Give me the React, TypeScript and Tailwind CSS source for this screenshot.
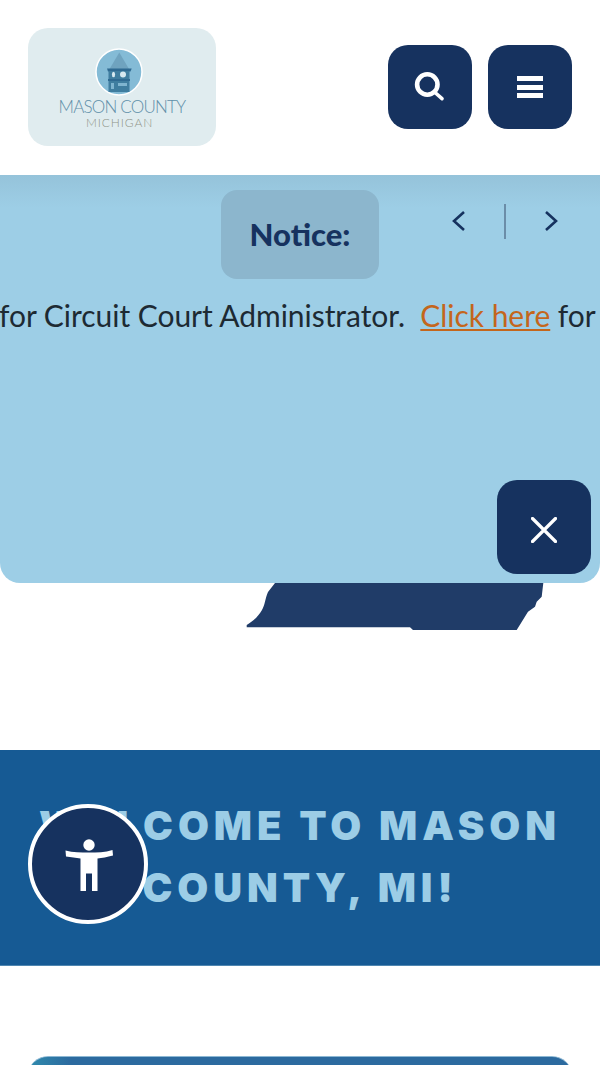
const bodyFont = { fontFamily: '"Lato", "Noto Sans", sans-serif' };

function Logo() {
  return (
    <div className="flex h-[118px] w-[188px] flex-col items-center rounded-[20px] bg-[#e0ecef] pt-[20px]">
      <svg width="48" height="48" viewBox="0 0 48 48" className="mr-[6px]">
        <circle cx="24" cy="24" r="23" fill="#84bbd6" stroke="#fff" strokeWidth="1.5" />
        <path d="M24.3 4.5 L34 21 H14.5 Z" fill="#6fa3bf" />
        <path d="M12 20.5 H36.7 L35.5 23.5 H13 Z" fill="#2f6a92" />
        <rect x="13.5" y="23" width="21" height="8" fill="#3f7d9f" />
        <rect x="13" y="31" width="22" height="2" fill="#2f6a92" />
        <rect x="13.5" y="33" width="21" height="11" fill="#3f7d9f" />
        <ellipse cx="18.5" cy="26.5" rx="1.6" ry="2.8" fill="#d6e8f0" />
        <circle cx="28" cy="26.5" r="3" fill="#d6e8f0" />
        <rect x="16" y="35" width="3" height="6" fill="#7fb4cf" />
        <rect x="23" y="35" width="9" height="3" fill="#7fb4cf" />
      </svg>
      <div className="mt-[1px] text-[17px] leading-[20px] font-light tracking-[-0.8px] whitespace-nowrap text-[#5f8fa9]" style={bodyFont}>
        MASON COUNTY
      </div>
      <div className="mr-[5px] text-[12px] leading-[11px] font-light tracking-[0.9px] text-[#8f9488]" style={bodyFont}>
        MICHIGAN
      </div>
    </div>
  );
}

function SearchIcon() {
  return (
    <svg width="32" height="32" viewBox="0 0 32 32" fill="none" stroke="#fff">
      <circle cx="13.3" cy="13.5" r="10.2" strokeWidth="4.6" />
      <path d="M21 21.5 L28 27.7" strokeWidth="3.6" strokeLinecap="round" />
    </svg>
  );
}

function MenuIcon() {
  return (
    <div className="flex w-[26px] flex-col gap-[3.3px]">
      <div className="h-[5px] bg-white" />
      <div className="h-[5px] bg-white" />
      <div className="h-[5px] bg-white" />
    </div>
  );
}

function CloseIcon() {
  return (
    <svg width="26" height="26" viewBox="0 0 26 26" stroke="#fff" strokeWidth="3.2" strokeLinecap="round">
      <path d="M1.5 1.5 L24.5 24.5 M24.5 1.5 L1.5 24.5" />
    </svg>
  );
}

function AccessIcon() {
  return (
    <svg width="50" height="54" viewBox="0 0 50 54" fill="#fff" className="ml-[1px]">
      <circle cx="25" cy="8" r="5.7" />
      <path d="M1.5 13.5 C9 15.5 17 15.5 25 15.5 C33 15.5 41 15.5 48.5 13 L49 18.5 C43 20 38 21 33.5 21.5 V54 H28 V36.5 H22 V54 H16.5 V21.5 C12 21 7 20 2 19.5 Z" />
    </svg>
  );
}

export default function App() {
  return (
    <div className="relative h-[1065px] w-[600px] overflow-hidden bg-white" style={bodyFont}>
      <header className="flex h-[175px] items-start justify-between px-[28px] pt-[28px]">
        <Logo />
        <div className="mt-[17px] flex gap-[16px]">
          <button className="flex h-[84px] w-[84px] items-center justify-center rounded-[20px] bg-[#16325f]">
            <SearchIcon />
          </button>
          <button className="flex h-[84px] w-[84px] items-center justify-center rounded-[20px] bg-[#16325f]">
            <MenuIcon />
          </button>
        </div>
      </header>

      {/* map silhouette, mostly hidden behind the notice */}
      <div className="h-[408px]" />
      <svg width="600" height="47" viewBox="0 0 600 47" className="block">
        <path
          d="M275 0 L268 9 C265 16 265 22 262 27 C258 34 252 39 246.7 42 V44.3 H410 L413 47 H516.7 L528 28.7 L535 23.7 L536.7 18.7 L541.7 13.7 L543.3 0 Z"
          fill="#203c68"
        />
      </svg>

      <div className="h-[120px]" />

      <section className="flex h-[216px] items-center justify-center border-b border-[#4f86b0] bg-[#165a94] px-[30px] pb-[2px]">
        <h1
          className="text-center text-[40px] leading-[62px] font-black tracking-[4.9px] text-[#9ccde6]"
          style={{ fontFamily: '"Inter", "Open Sans", sans-serif' }}
        >
          WELCOME TO MASON COUNTY, MI!
        </h1>
      </section>

      <div className="h-[90px]" />
      <div className="mx-[28px] h-[40px] rounded-t-[20px] border-t border-[#8db8d4] bg-gradient-to-r from-[#2f8bad] to-[#2c6a9f] to-[8%]" />

      {/* notice overlay */}
      <div className="absolute top-[175px] right-0 left-0 h-[408px] overflow-hidden rounded-b-[20px] bg-gradient-to-b from-[#95c3da] to-[#9dcee6] to-[8%]">
        <div className="absolute top-[15px] left-[221px] flex h-[89px] w-[158px] items-center justify-center rounded-[16px] bg-[#8cb6cd]">
          <span className="text-[31px] font-black text-[#16325f]">Notice:</span>
        </div>
        <div className="absolute top-[29px] left-[444px] flex h-[34px] items-center text-[#16325f]">
          <svg width="30" height="34" viewBox="0 0 30 34" fill="none" stroke="#16325f" strokeWidth="2.6">
            <path d="M20 8 L10 17 L20 26" />
          </svg>
          <div className="mx-[30px] h-[35px] w-[2px] bg-[#6b8da8]" />
          <svg width="30" height="34" viewBox="0 0 30 34" fill="none" stroke="#16325f" strokeWidth="2.6">
            <path d="M10 8 L20 17 L10 26" />
          </svg>
        </div>
        <div className="absolute top-[120px] -left-[1px] text-[30px] leading-[40px] tracking-[-0.04px] whitespace-nowrap text-[#1d2a33]">
          for Circuit Court Administrator.&nbsp; <span className="text-[#c4661c] underline decoration-2 underline-offset-2">Click here</span> for
        </div>
        <button className="absolute top-[305px] left-[497px] flex h-[94px] w-[94px] items-center justify-center rounded-[20px] bg-[#16325f] pt-[6px]">
          <CloseIcon />
        </button>
      </div>

      {/* accessibility launcher */}
      <button className="absolute top-[804px] left-[28px] flex h-[120px] w-[120px] items-center justify-center rounded-full border-[4px] border-white bg-[#16325f]">
        <AccessIcon />
      </button>
    </div>
  );
}
